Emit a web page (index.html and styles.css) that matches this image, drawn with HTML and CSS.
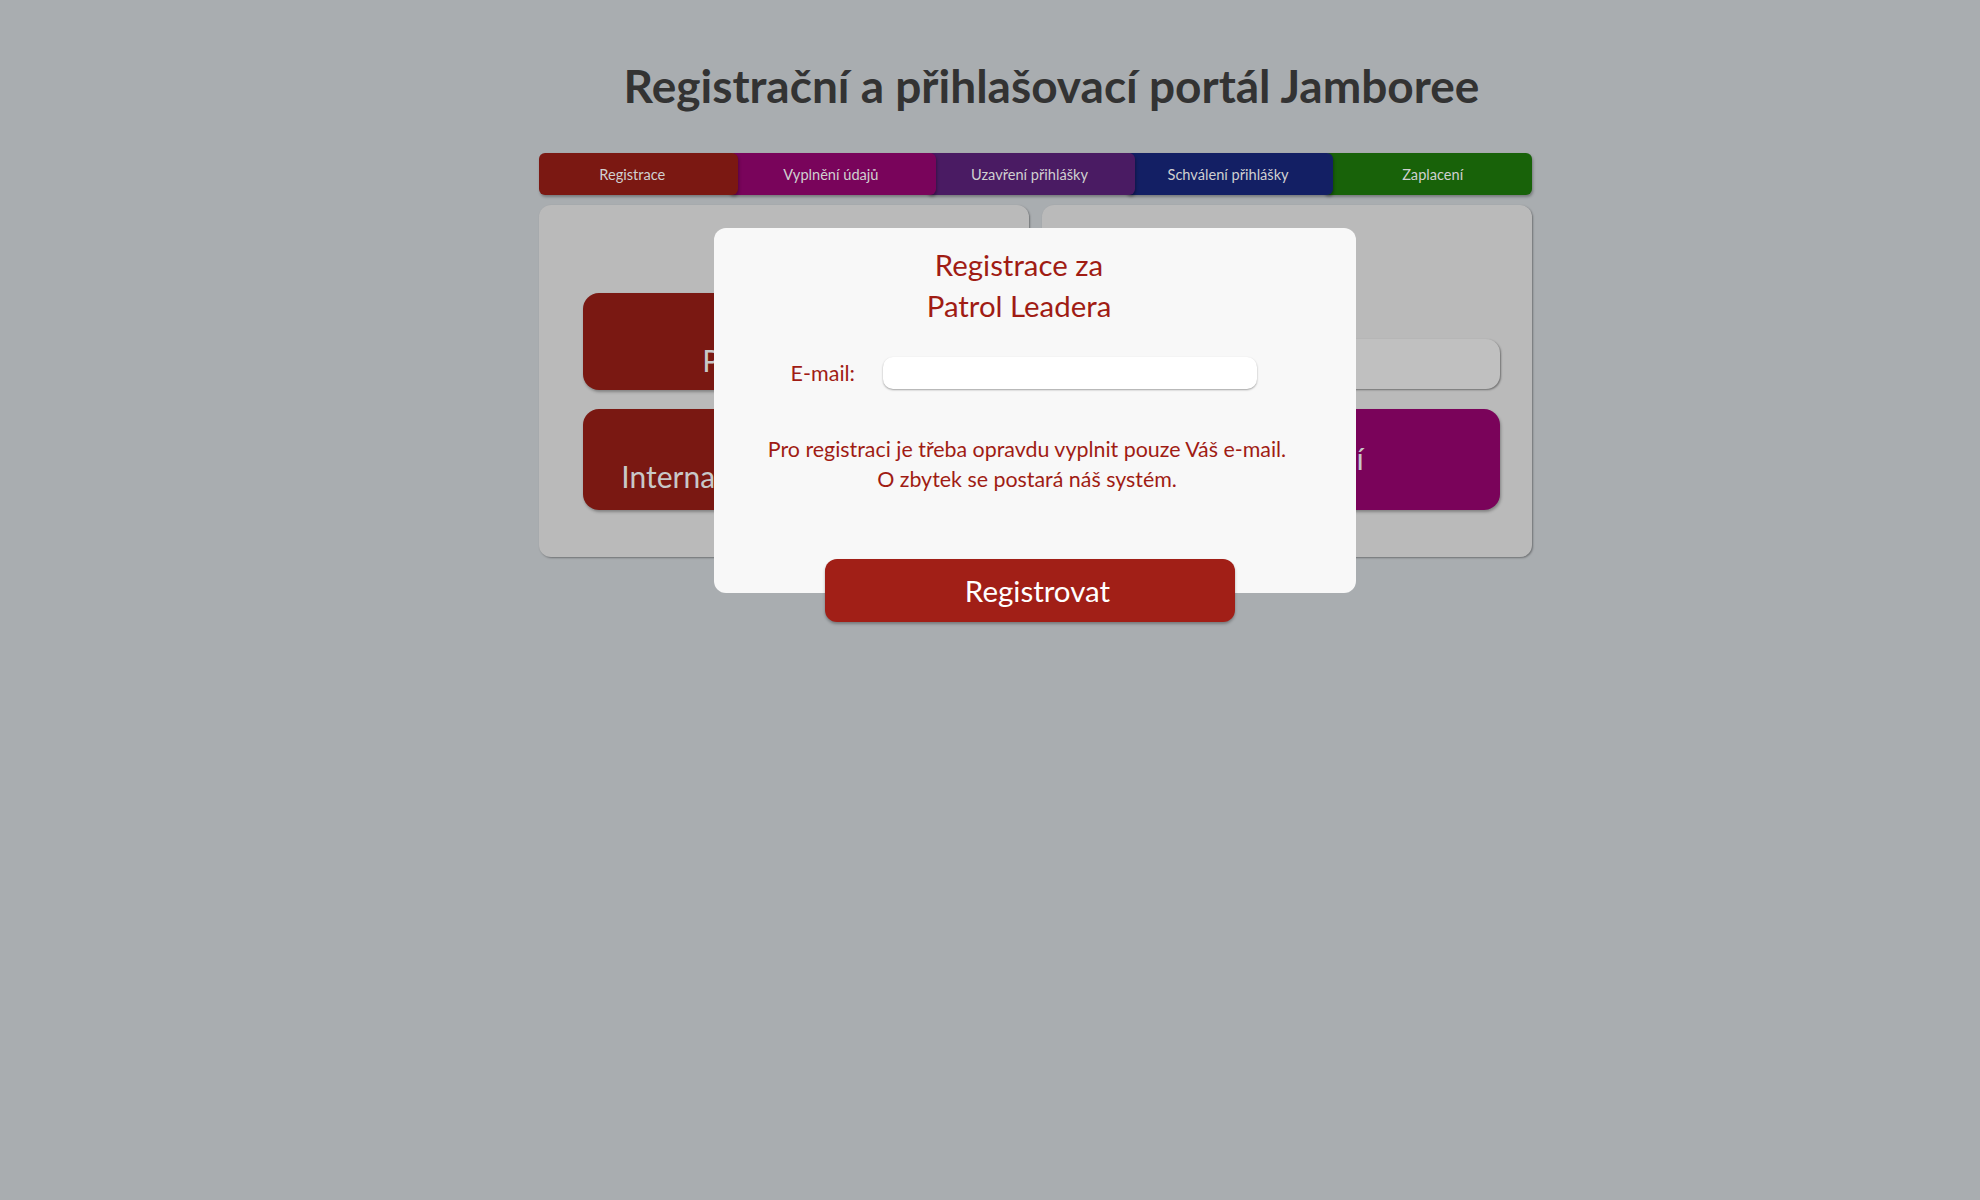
FILE: index.html
```html
<!DOCTYPE html>
<html lang="cs">
<head>
<meta charset="utf-8">
<title>Registrační a přihlašovací portál Jamboree</title>
<link rel="stylesheet" href="styles.css">
</head>
<body>
<div class="page">
  <h1 class="page-title">Registrační a přihlašovací portál Jamboree</h1>
  <nav class="steps">
    <div class="step step--red">Registrace</div>
    <div class="step step--magenta">Vyplnění údajů</div>
    <div class="step step--violet">Uzavření přihlášky</div>
    <div class="step step--navy">Schválení přihlášky</div>
    <div class="step step--green">Zaplacení</div>
  </nav>
  <main class="panels">
    <section class="panel panel--left">
      <a class="big-btn big-btn--red big-btn--first">Patrol Leader</a>
      <a class="big-btn big-btn--red big-btn--second">International Service Team</a>
    </section>
    <section class="panel panel--right">
      <div class="fake-field"></div>
      <a class="big-btn big-btn--purple">Přihlášení</a>
    </section>
  </main>
</div>

<div class="modal">
  <h2 class="modal-title">Registrace za<br>Patrol Leadera</h2>
  <div class="form-row">
    <label class="form-label" for="email">E-mail:</label>
    <input class="form-input" id="email" type="email">
  </div>
  <p class="modal-hint">Pro registraci je třeba opravdu vyplnit pouze Váš e-mail.<br>O zbytek se postará náš systém.</p>
  <button class="modal-submit" type="button">Registrovat</button>
</div>
</body>
</html>
```

FILE: styles.css
```css
html, body {
  margin: 0;
  padding: 0;
}

body {
  background: #a9adb0;
  font-family: Lato, "Open Sans", "Liberation Sans", sans-serif;
  min-height: 1200px;
}

.page {
  width: 993px;
  margin: 0 0 0 539px;
  padding-top: 61px;
}

.page-title {
  margin: 0 0 42px;
  padding-left: 32px;
  text-align: center;
  font-size: 46px;
  line-height: 50px;
  font-weight: 700;
  color: #333333;
}

/* steps bar */
.steps {
  display: flex;
  height: 42px;
  margin-bottom: 10px;
}

.step {
  flex: none;
  width: 198.6px;
  box-sizing: border-box;
  display: flex;
  align-items: center;
  justify-content: center;
  border-radius: 6px;
  box-shadow: 1px 2px 3px rgba(0, 0, 0, 0.3);
  color: #d0d0d0;
  font-size: 14.6px;
  position: relative;
}

.step + .step {
  width: 208.6px;
  margin-left: -10px;
  padding-left: 10px;
}

.step:not(:last-child) {
  padding-right: 12px;
}

.step--red { background: #7b1812; z-index: 5; }
.step--magenta { background: #79045b; z-index: 4; }
.step--violet { background: #4a1b63; z-index: 3; }
.step--navy { background: #131f64; z-index: 2; }
.step--green { background: #186209; z-index: 1; }

/* panels */
.panels {
  display: flex;
  gap: 13px;
}

.panel {
  flex: none;
  width: 490px;
  height: 352px;
  box-sizing: border-box;
  background: #bababa;
  border-radius: 12px;
  box-shadow: 1px 1px 2px rgba(0, 0, 0, 0.35);
  display: flex;
  flex-direction: column;
}

.panel--left {
  padding: 88px 44px 0;
  gap: 19px;
}

.panel--right {
  padding: 134px 32px 0;
  gap: 20px;
}

.big-btn {
  display: block;
  box-sizing: border-box;
  border-radius: 16px;
  color: #c8c8c8;
  font-size: 30px;
  line-height: 36px;
  text-align: center;
  box-shadow: 1px 2px 3px rgba(0, 0, 0, 0.3);
}

.big-btn--red {
  background: #7a1812;
  padding-top: 49px;
}

.big-btn--first { height: 97px; padding-left: 10px; }
.big-btn--second { height: 101px; padding-left: 22px; }

.big-btn--purple {
  background: #7a035a;
  height: 101px;
  padding-top: 31px;
  padding-left: 26px;
}

.fake-field {
  height: 50px;
  border-radius: 14px;
  background: #c0c0c0;
  box-shadow: 1px 1px 2px rgba(0, 0, 0, 0.4);
}

/* modal */
.modal {
  position: absolute;
  left: 714px;
  top: 228px;
  width: 642px;
  box-sizing: border-box;
  padding-top: 16px;
  background: #f8f8f8;
  border-radius: 12px;
  display: flex;
  flex-direction: column;
  color: #a01c14;
}

.modal-title {
  margin: 0 32px 0 0;
  font-size: 29.4px;
  line-height: 41px;
  font-weight: 400;
  text-align: center;
}

.form-row {
  display: flex;
  align-items: center;
  gap: 28px;
  margin-top: 31px;
}

.form-label {
  width: 141px;
  text-align: right;
  font-size: 21.5px;
  line-height: 32px;
}

.form-input {
  width: 374px;
  height: 32px;
  box-sizing: border-box;
  border: 0;
  padding: 0 10px;
  border-radius: 10px;
  background: #ffffff;
  box-shadow: 0 1px 2px rgba(0, 0, 0, 0.35);
  font: inherit;
}

.modal-hint {
  margin: 45px 16px 0 0;
  font-size: 21.4px;
  line-height: 30px;
  text-align: center;
}

.modal-submit {
  margin: 65px 0 -29px 111px;
  width: 410px;
  height: 63px;
  padding: 0 0 0 15px;
  border: 0;
  border-radius: 12px;
  background: #a11f17;
  color: #ffffff;
  font-family: inherit;
  font-size: 29.5px;
  line-height: 63px;
  box-shadow: 0 2px 3px rgba(0, 0, 0, 0.3);
}
```
